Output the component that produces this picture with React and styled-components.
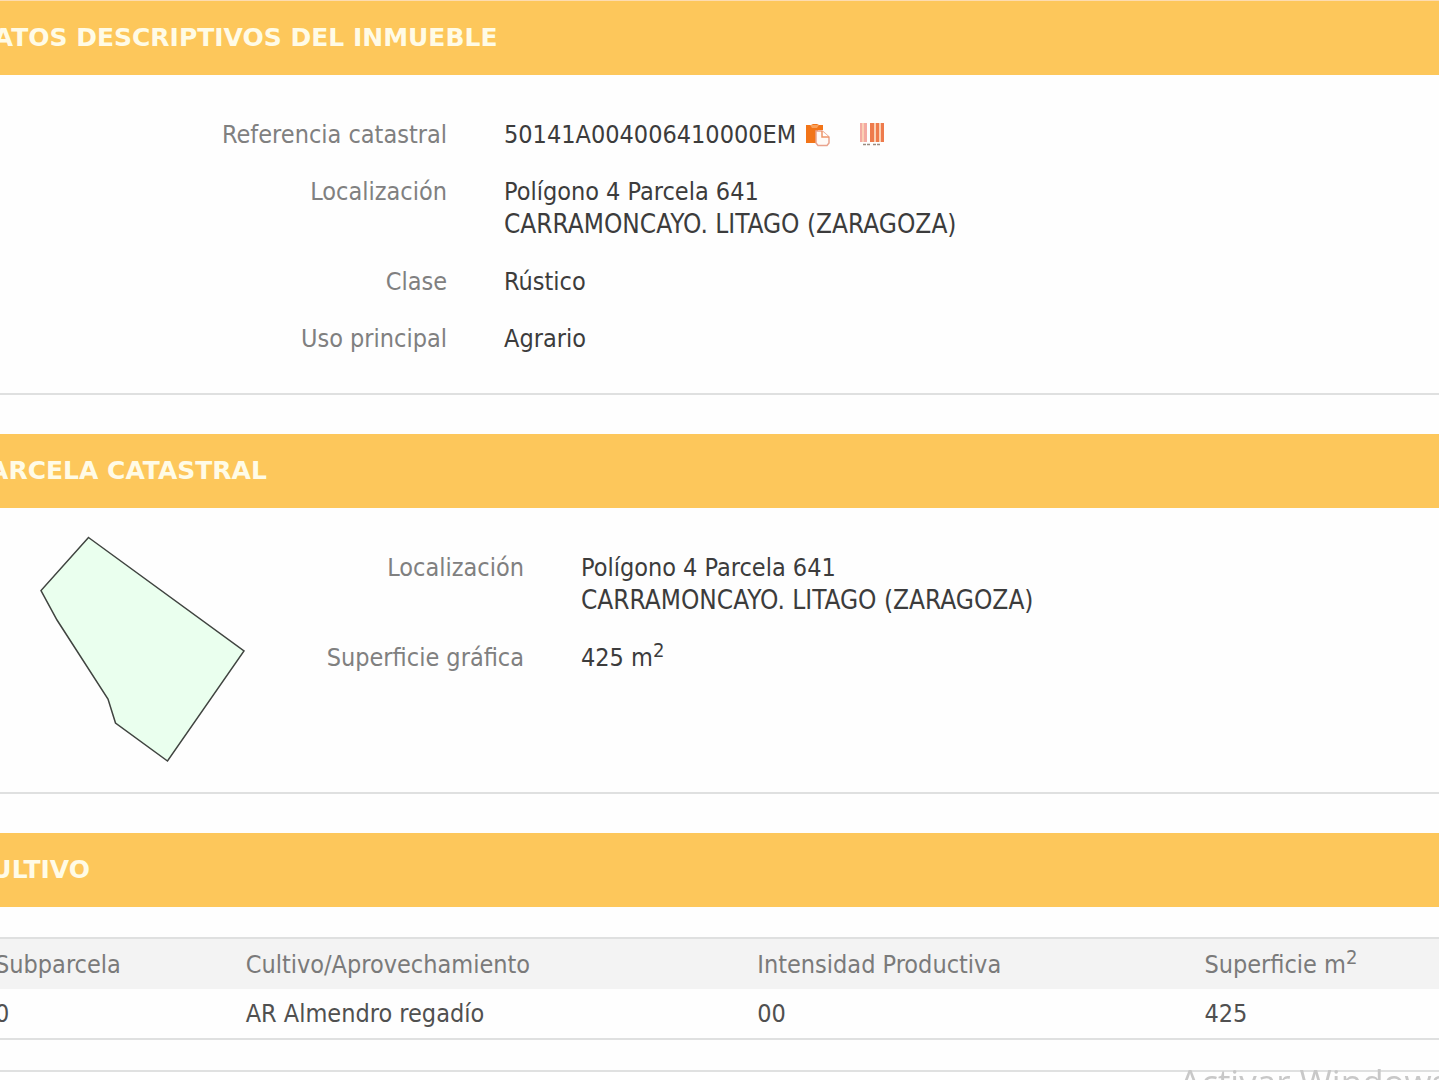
import React from 'react';
import styled, { createGlobalStyle } from 'styled-components';

const GlobalStyle = createGlobalStyle`
  * { box-sizing: border-box; }
  body {
    margin: 0;
    background: #fefefe;
    color: #3c3c3c;
    font-family: "DejaVu Sans Condensed", "DejaVu Sans", Verdana, sans-serif;
    font-size: 25px;
    line-height: 33px;
    overflow: hidden;
  }
`;

const Page = styled.main`
  margin-left: -27px;
  border-top: 1px solid #fddcb0;
`;

const Section = styled.section`
  margin-bottom: 39px;
  border-bottom: 2px solid #dfe0e0;
`;

const Heading = styled.h2`
  margin: 0;
  padding: 20px 0;
  background: #fdc75b;
  color: #fffbe6;
  font-family: "DejaVu Sans", Verdana, sans-serif;
  font-size: 25px;
  font-weight: 700;
  line-height: 34px;
`;

const Body = styled.div`
  display: flex;
  padding: ${(p) => (p.$withMap ? '28px 0 29px 67px' : '43px 0 38px')};
`;

const Details = styled.dl`
  display: grid;
  grid-template-columns: ${(p) => p.$labelWidth}px 1fr;
  align-content: start;
  gap: 24px 57px;
  flex: 1;
  margin: 0;
  padding-top: ${(p) => (p.$inset ? 15 : 0)}px;
`;

const Label = styled.dt`
  color: #808080;
  text-align: right;
`;

const Value = styled.dd`
  margin: 0;
`;

const Reference = styled.span`
  display: flex;
  align-items: center;
`;

const Place = styled.span`
  display: block;
  font-size: 26px;
`;

const Sup = styled.sup`
  font-size: 20px;
  line-height: 0;
  vertical-align: 9px;
`;

const IconButton = styled.button`
  display: flex;
  margin: 0 20px 0 10px;
  padding: 0;
  border: 0;
  background: none;
`;

const ParcelMap = styled.svg`
  display: block;
  width: 206px;
  height: 227px;
`;

const TableWrap = styled.div`
  padding: 30px 0;
`;

const Table = styled.table`
  width: 100%;
  table-layout: fixed;
  border-collapse: collapse;
  border-top: 2px solid #dfe0e0;
  border-bottom: 2px solid #dfe0e0;
  text-align: left;
`;

const Th = styled.th`
  width: ${(p) => p.$width};
  padding: 9px 0 8px 22px;
  background: #f3f3f3;
  color: #7a7a7a;
  font-weight: 400;
`;

const Td = styled.td`
  padding: 8px 0 8px 22px;
  color: #505050;
`;

const Watermark = styled.div`
  position: fixed;
  right: 0;
  bottom: 0;
  width: 260px;
  height: 16px;
  overflow: hidden;
  color: #c8c8c8;
  font-family: "Open Sans", "Noto Sans", sans-serif;
  font-size: 35px;
  line-height: 36px;
  white-space: nowrap;
`;

function CopyIcon() {
  return (
    <svg width="24" height="24" viewBox="0 0 24 24" aria-hidden="true">
      <path d="M0 2h5l2-1h4l2 1h4v5h-5v13H0z" fill="#f27418" />
      <path d="M4 2h9l-2 3H6z" fill="#f9a05a" />
      <path d="M10 8h6l7 6v6l-2 2.500H12l-2-2.500z" fill="#fffaf7" stroke="#e9a28c" strokeWidth="1.500" />
      <path d="M16 8v6h7" fill="#fff" stroke="#ee9468" strokeWidth="1.500" />
    </svg>
  );
}

function BarcodeIcon() {
  return (
    <svg width="24" height="24" viewBox="0 0 24 24" aria-hidden="true">
      <path d="M0 0h2v19H0zM4 0h3v19H4z" fill="#f3aaa2" />
      <path d="M10 0h4v19h-4zM16 0h3v19h-3zM21 0h3v19h-3z" fill="#ee7b4c" />
      <path d="M2 0h2v19H2zM14 0h2v19h-2zM19 0h2v19h-2z" fill="#fbd0b4" />
      <path d="M3 21.500h8M13 21.500h8" stroke="#9a8c80" strokeWidth="1.500" strokeDasharray="3 1" />
    </svg>
  );
}

function Location() {
  return (
    <Value>
      Polígono 4 Parcela 641
      <Place>CARRAMONCAYO. LITAGO (ZARAGOZA)</Place>
    </Value>
  );
}

export default function App() {
  return (
    <>
      <GlobalStyle />
      <Page>
        <Section>
          <Heading>DATOS DESCRIPTIVOS DEL INMUEBLE</Heading>
          <Body>
            <Details $labelWidth={474}>
              <Label>Referencia catastral</Label>
              <Value>
                <Reference>
                  50141A004006410000EM
                  <IconButton type="button" aria-label="Copiar"><CopyIcon /></IconButton>
                  <IconButton type="button" aria-label="Código de barras"><BarcodeIcon /></IconButton>
                </Reference>
              </Value>
              <Label>Localización</Label>
              <Location />
              <Label>Clase</Label>
              <Value>Rústico</Value>
              <Label>Uso principal</Label>
              <Value>Agrario</Value>
            </Details>
          </Body>
        </Section>

        <Section>
          <Heading>PARCELA CATASTRAL</Heading>
          <Body $withMap>
            <ParcelMap viewBox="0 0 206 227" role="img" aria-label="Parcela">
              <path
                d="M48.500 1.500L204 115L127.500 225L75.500 187L68 163L17 84L1 54.500z"
                fill="#eaffee"
                stroke="#404440"
                strokeWidth="1.500"
              />
            </ParcelMap>
            <Details $labelWidth={278} $inset>
              <Label>Localización</Label>
              <Location />
              <Label>Superficie gráfica</Label>
              <Value>425 m<Sup>2</Sup></Value>
            </Details>
          </Body>
        </Section>

        <Section>
          <Heading>CULTIVO</Heading>
          <TableWrap>
            <Table>
              <thead>
                <tr>
                  <Th $width="17.1%">Subparcela</Th>
                  <Th $width="34.9%">Cultivo/Aprovechamiento</Th>
                  <Th $width="30.5%">Intensidad Productiva</Th>
                  <Th>Superficie m<Sup>2</Sup></Th>
                </tr>
              </thead>
              <tbody>
                <tr>
                  <Td>0</Td>
                  <Td>AR Almendro regadío</Td>
                  <Td>00</Td>
                  <Td>425</Td>
                </tr>
              </tbody>
            </Table>
          </TableWrap>
        </Section>
      </Page>
      <Watermark>Activar Windows</Watermark>
    </>
  );
}
